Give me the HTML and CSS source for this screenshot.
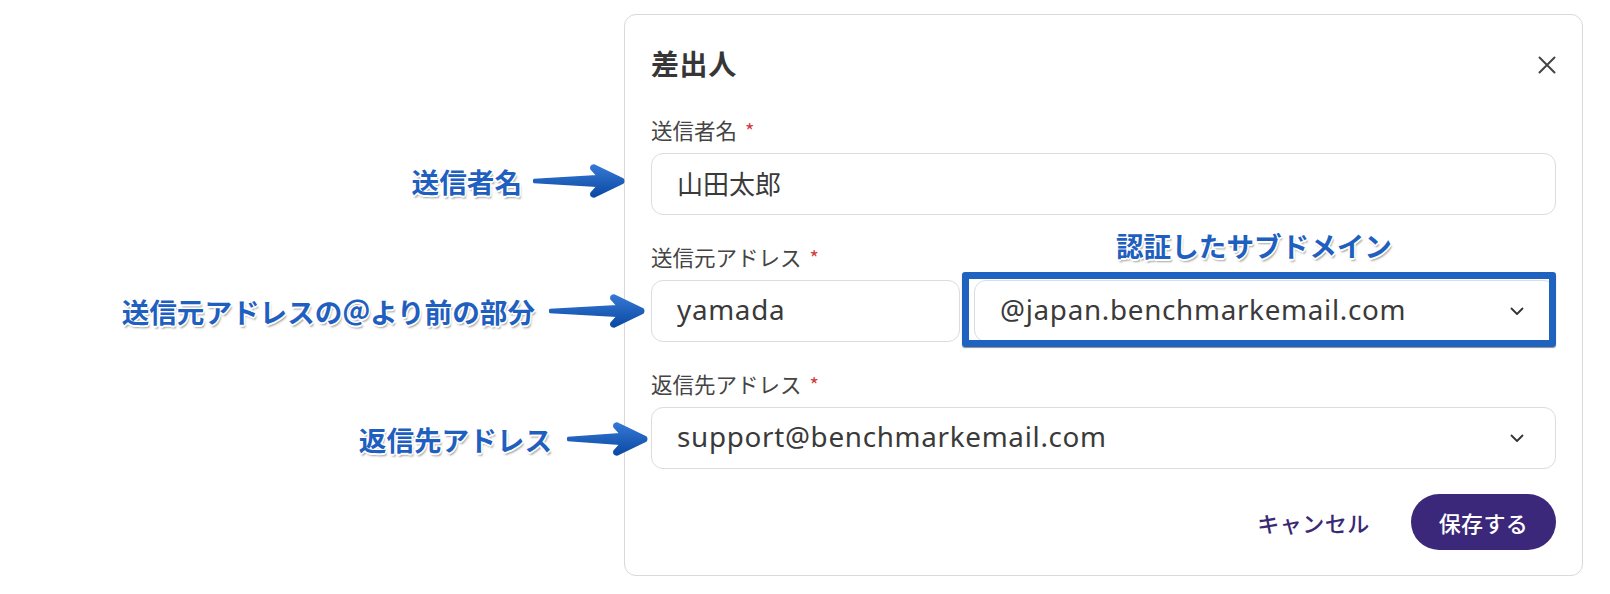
FILE: index.html
```html
<!DOCTYPE html>
<html lang="ja">
<head>
<meta charset="utf-8">
<title>差出人</title>
<link rel="stylesheet" href="styles.css">
</head>
<body>
<div class="stage">
  <section class="card">
    <header class="card-head">
      <h2 class="title">差出人</h2>
      <button class="close" aria-label="close">
        <svg width="18" height="18" viewBox="0 0 18 18"><path d="M1.5 1.5 L16.5 16.5 M16.5 1.5 L1.5 16.5" stroke="#444" stroke-width="2" stroke-linecap="round" fill="none"/></svg>
      </button>
    </header>

    <div class="field">
      <div class="label">送信者名<span class="req">*</span></div>
      <div class="control control-ja">山田太郎</div>
    </div>

    <div class="field">
      <div class="label">送信元アドレス<span class="req">*</span></div>
      <div class="row">
        <div class="control control-local">yamada</div>
        <div class="control control-select">
          <span>@japan.benchmarkemail.com</span>
          <svg class="chev" width="14" height="9" viewBox="0 0 14 9"><polyline points="1.5,1.5 7,7 12.5,1.5" fill="none" stroke="#333" stroke-width="1.8" stroke-linecap="round" stroke-linejoin="round"/></svg>
        </div>
      </div>
    </div>

    <div class="field">
      <div class="label">返信先アドレス<span class="req">*</span></div>
      <div class="control control-select">
        <span>support@benchmarkemail.com</span>
        <svg class="chev" width="14" height="9" viewBox="0 0 14 9"><polyline points="1.5,1.5 7,7 12.5,1.5" fill="none" stroke="#333" stroke-width="1.8" stroke-linecap="round" stroke-linejoin="round"/></svg>
      </div>
    </div>

    <footer class="card-foot">
      <button class="btn-text">キャンセル</button>
      <button class="btn-primary">保存する</button>
    </footer>
  </section>

  <div class="highlight"></div>
  <div class="note note-domain">認証したサブドメイン</div>

  <div class="callout callout-1">
    <span class="note">送信者名</span>
    <svg class="arrow" width="92" height="36" viewBox="0 0 92 36">
      <defs><linearGradient id="ag1" x1="0" y1="0" x2="0" y2="1"><stop offset="0" stop-color="#3579d4"/><stop offset="1" stop-color="#0b49a3"/></linearGradient></defs>
      <path d="M1,16.6 L64,12.8 L58,6 Q57,2.5 61,2 L90,16 Q91.5,18 90,20 L61,34 Q57,33.5 58,30 L64,23.2 L1,19.4 Q0,18 1,16.6 Z" fill="url(#ag1)" stroke="url(#ag1)" stroke-width="1.5" stroke-linejoin="round"/>
    </svg>
  </div>

  <div class="callout callout-2">
    <span class="note">送信元アドレスの＠より前の部分</span>
    <svg class="arrow" width="96" height="36" viewBox="0 0 96 36">
      <defs><linearGradient id="ag2" x1="0" y1="0" x2="0" y2="1"><stop offset="0" stop-color="#3579d4"/><stop offset="1" stop-color="#0b49a3"/></linearGradient></defs>
      <path d="M1,16.6 L68,12.8 L62,6 Q61,2.5 65,2 L94,16 Q95.5,18 94,20 L65,34 Q61,33.5 62,30 L68,23.2 L1,19.4 Q0,18 1,16.6 Z" fill="url(#ag2)" stroke="url(#ag2)" stroke-width="1.5" stroke-linejoin="round"/>
    </svg>
  </div>

  <div class="callout callout-3">
    <span class="note">返信先アドレス</span>
    <svg class="arrow" width="81" height="36" viewBox="0 0 81 36">
      <defs><linearGradient id="ag3" x1="0" y1="0" x2="0" y2="1"><stop offset="0" stop-color="#3579d4"/><stop offset="1" stop-color="#0b49a3"/></linearGradient></defs>
      <path d="M1,16.6 L53,12.8 L47,6 Q46,2.5 50,2 L79,16 Q80.5,18 79,20 L50,34 Q46,33.5 47,30 L53,23.2 L1,19.4 Q0,18 1,16.6 Z" fill="url(#ag3)" stroke="url(#ag3)" stroke-width="1.5" stroke-linejoin="round"/>
    </svg>
  </div>
</div>
</body>
</html>
```

FILE: styles.css
```css
* { box-sizing: border-box; }

html, body {
  margin: 0;
  padding: 0;
  background: #ffffff;
}

body {
  font-family: "Noto Sans", "Noto Sans CJK JP", sans-serif;
  color: #3a3a3a;
}

.stage {
  position: relative;
  width: 1610px;
  height: 594px;
  padding-top: 14px;
  overflow: hidden;
}

.card {
  margin-left: 624px;
  width: 959px;
  height: 562px;
  border: 1px solid #d9d9d9;
  border-radius: 12px;
  padding: 30px 26px 25px 26px;
  display: flex;
  flex-direction: column;
  background: #fff;
}

.card-head {
  display: flex;
  align-items: center;
  justify-content: space-between;
  height: 36px;
  margin-bottom: 35px;
}

.title {
  margin: 0;
  font-family: "Noto Sans CJK JP", sans-serif;
  font-size: 28px;
  font-weight: 700;
  letter-spacing: 0.6px;
  line-height: 36px;
  color: #363636;
}

.close {
  width: 22px;
  height: 24px;
  margin-top: 4px;
  padding: 0;
  border: 0;
  background: none;
  display: flex;
  align-items: center;
  justify-content: flex-end;
}

.field + .field {
  margin-top: 28px;
}

.label {
  font-family: "Noto Sans CJK JP", sans-serif;
  font-size: 21.5px;
  line-height: 28px;
  color: #444;
  margin-bottom: 8px;
}

.req {
  color: #d23b3b;
  font-size: 20px;
  margin-left: 8px;
}

.control {
  height: 62px;
  border: 1px solid #dcdcdc;
  border-radius: 12px;
  padding: 0 31px 4px 25px;
  display: flex;
  align-items: center;
  font-size: 27.8px;
  letter-spacing: 0.7px;
  color: #3a3a3a;
  background: #fff;
}

.control-ja {
  font-family: "Noto Sans CJK JP", sans-serif;
  font-size: 26px;
  letter-spacing: 0;
  padding-bottom: 3px;
}

.row {
  display: flex;
  gap: 14px;
}

.control-local {
  width: 309px;
  flex: none;
}

.control-select {
  flex: 1;
  justify-content: space-between;
}

.chev {
  flex: none;
  margin-top: 4px;
}

.card-foot {
  margin-top: 25px;
  display: flex;
  justify-content: flex-end;
  align-items: center;
  gap: 41px;
}

.btn-text {
  border: 0;
  background: none;
  padding: 0;
  font-family: "Noto Sans CJK JP", sans-serif;
  font-size: 22px;
  font-weight: 500;
  letter-spacing: 0.5px;
  color: #3a2a72;
}

.btn-primary {
  height: 56px;
  padding: 0 28px;
  border: 0;
  border-radius: 28px;
  background: #3c287a;
  color: #fff;
  font-family: "Noto Sans CJK JP", sans-serif;
  font-size: 22px;
  font-weight: 500;
  letter-spacing: 0.3px;
}

/* annotation overlays */
.highlight {
  position: absolute;
  left: 962px;
  top: 272px;
  width: 594px;
  height: 75px;
  border: 7px solid #2062c0;
  border-radius: 3px;
  box-shadow: 0 1px 1px rgba(0, 0, 0, 0.45);
}

.note {
  font-family: "Noto Sans CJK JP", sans-serif;
  font-size: 27.6px;
  font-weight: 700;
  line-height: 36px;
  color: #1f5fc0;
  white-space: nowrap;
  text-shadow:
    -1.5px 0 #fff, 1.5px 0 #fff, 0 -1.5px #fff, 0 1.5px #fff,
    -1.2px -1.2px #fff, 1.2px -1.2px #fff, -1.2px 1.2px #fff, 1.2px 1.2px #fff,
    1.5px 2.5px 2px rgba(0, 0, 0, 0.35);
}

.note-domain {
  position: absolute;
  left: 1116px;
  top: 227px;
}

.callout {
  position: absolute;
  display: flex;
  align-items: center;
}

.callout-1 { right: 985px; top: 163px; gap: 11px; }
.callout-2 { right: 965px; top: 293px; gap: 14px; }
.callout-3 { right: 962px; top: 421px; gap: 15px; }

.arrow { flex: none; display: block; }
```
